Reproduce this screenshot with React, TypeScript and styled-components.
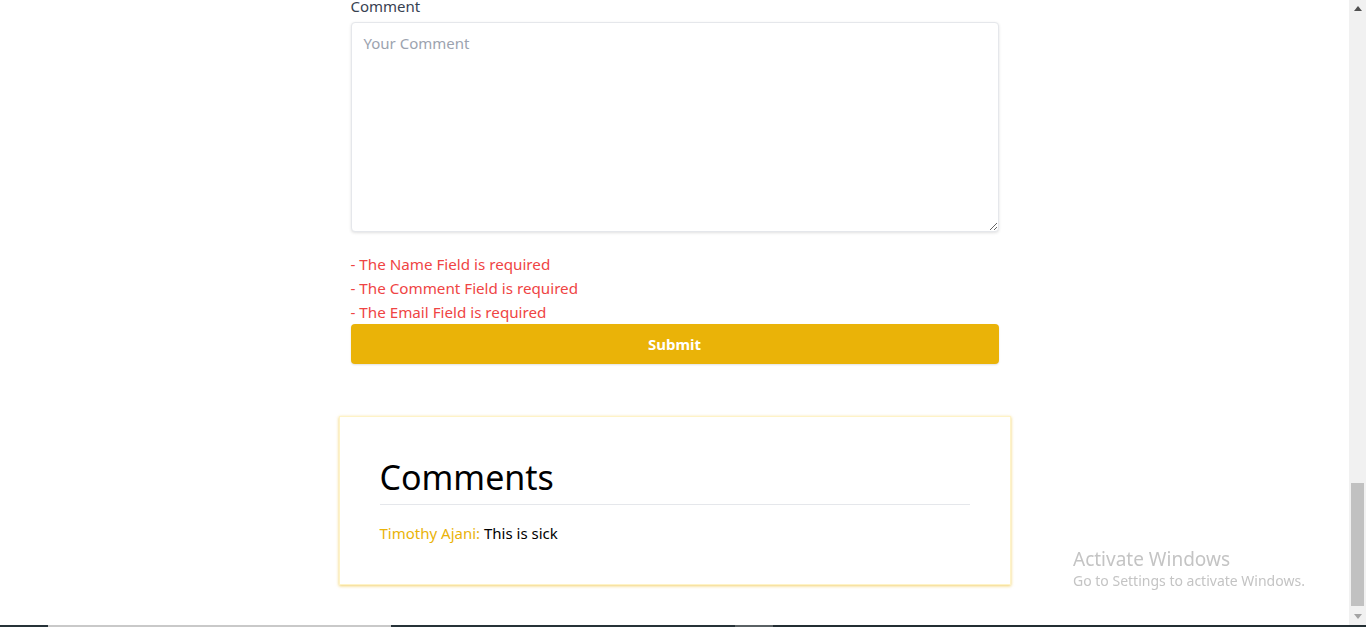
import React from "react";
import styled, { createGlobalStyle } from "styled-components";

const Global = createGlobalStyle`
  html, body { margin: 0; padding: 0; background: #ffffff; overflow: hidden; }
  body { font-family: "Noto Sans", "Open Sans", sans-serif; }
  * { box-sizing: border-box; }
`;

const Viewport = styled.div`
  width: 1349px;
  height: 627px;
  overflow: hidden;
  background: #ffffff;
`;

const FormColumn = styled.form`
  width: 648px;
  margin: 0 auto;
  display: flex;
  flex-direction: column;
`;

const Label = styled.label`
  font-size: 15px;
  line-height: 20px;
  color: #374151;
  margin-top: -4px;
`;

const TextArea = styled.textarea`
  margin-top: 6px;
  height: 210px;
  width: 100%;
  padding: 10px 12px;
  border: 1px solid #e5e7eb;
  border-radius: 4px;
  box-shadow: 0 1px 3px rgba(0, 0, 0, 0.12);
  font-family: inherit;
  font-size: 15px;
  line-height: 20px;
  color: #374151;
  resize: vertical;
  outline: none;
  &::placeholder { color: #9ca3af; }
`;

const ErrorList = styled.ul`
  list-style: none;
  margin: 20px 0 0;
  padding: 0;
`;

const ErrorItem = styled.li`
  font-size: 15.2px;
  line-height: 24px;
  color: #ef4444;
`;

const SubmitButton = styled.button`
  height: 40px;
  width: 100%;
  border: none;
  border-radius: 4px;
  background: #eab308;
  color: #ffffff;
  font-family: inherit;
  font-weight: 700;
  font-size: 15px;
  box-shadow: 0 1px 2px rgba(0, 0, 0, 0.12);
  cursor: pointer;
`;

const CommentsCard = styled.section`
  width: 672px;
  margin: 52px auto 0;
  padding: 38px 40px 39px;
  border: 1px solid #fef3c7;
  box-shadow: 0 1px 3px rgba(234, 179, 8, 0.6);
  background: #ffffff;
`;

const CardTitle = styled.h2`
  margin: 0;
  font-weight: 400;
  font-size: 34px;
  line-height: 44px;
  color: #000000;
  padding-bottom: 5px;
  border-bottom: 1px solid #e5e7eb;
`;

const CommentLine = styled.p`
  margin: 16px 0 0;
  font-size: 15px;
  line-height: 24px;
  color: #000000;
`;

const Author = styled.span`
  color: #eab308;
`;

const Watermark = styled.div`
  position: fixed;
  left: 1073px;
  top: 546px;
  color: #c4c4c4;
  font-family: "Noto Sans", sans-serif;
  pointer-events: none;
`;

const WatermarkTitle = styled.div`
  font-size: 19px;
  line-height: 26px;
`;

const WatermarkSub = styled.div`
  font-size: 14px;
  line-height: 18px;
`;

const ScrollTrack = styled.div`
  position: fixed;
  right: 0;
  top: 0;
  width: 17px;
  height: 625px;
  background: #f1f1f1;
  display: flex;
  flex-direction: column;
  align-items: center;
`;

const Arrow = styled.div`
  height: 17px;
  width: 17px;
  display: flex;
  align-items: center;
  justify-content: center;
`;

const TrackSpace = styled.div`
  flex: 1;
`;

const Thumb = styled.div`
  position: absolute;
  left: 2px;
  top: 483px;
  width: 13px;
  height: 123px;
  background: #c1c1c1;
`;

const Taskbar = styled.div`
  position: fixed;
  left: 0;
  bottom: 0;
  width: 1366px;
  height: 2px;
  display: flex;
  background: #232e33;
`;

const TaskSeg = styled.div<{ $w: number; $c: string }>`
  width: ${(p) => p.$w}px;
  background: ${(p) => p.$c};
`;

export default function App() {
  return (
    <>
      <Global />
      <Viewport>
        <FormColumn onSubmit={(e) => e.preventDefault()}>
          <Label htmlFor="comment">Comment</Label>
          <TextArea id="comment" placeholder="Your Comment" />
          <ErrorList>
            <ErrorItem>- The Name Field is required</ErrorItem>
            <ErrorItem>- The Comment Field is required</ErrorItem>
            <ErrorItem>- The Email Field is required</ErrorItem>
          </ErrorList>
          <SubmitButton type="submit">Submit</SubmitButton>
        </FormColumn>
        <CommentsCard>
          <CardTitle>Comments</CardTitle>
          <CommentLine>
            <Author>Timothy Ajani: </Author>This is sick
          </CommentLine>
        </CommentsCard>
      </Viewport>
      <Watermark>
        <WatermarkTitle>Activate Windows</WatermarkTitle>
        <WatermarkSub>Go to Settings to activate Windows.</WatermarkSub>
      </Watermark>
      <ScrollTrack>
        <Arrow>
          <svg width="8" height="5" viewBox="0 0 8 5"><path d="M0 5 L4 0 L8 5 Z" fill="#505050" /></svg>
        </Arrow>
        <Thumb />
        <TrackSpace />
        <Arrow>
          <svg width="8" height="5" viewBox="0 0 8 5"><path d="M0 0 L8 0 L4 5 Z" fill="#a3a3a3" /></svg>
        </Arrow>
      </ScrollTrack>
      <Taskbar>
        <TaskSeg $w={48} $c="#263238" />
        <TaskSeg $w={343} $c="#c9c9c9" />
        <TaskSeg $w={344} $c="#263238" />
        <TaskSeg $w={38} $c="#5a6164" />
        <TaskSeg $w={593} $c="#232e33" />
      </Taskbar>
    </>
  );
}
